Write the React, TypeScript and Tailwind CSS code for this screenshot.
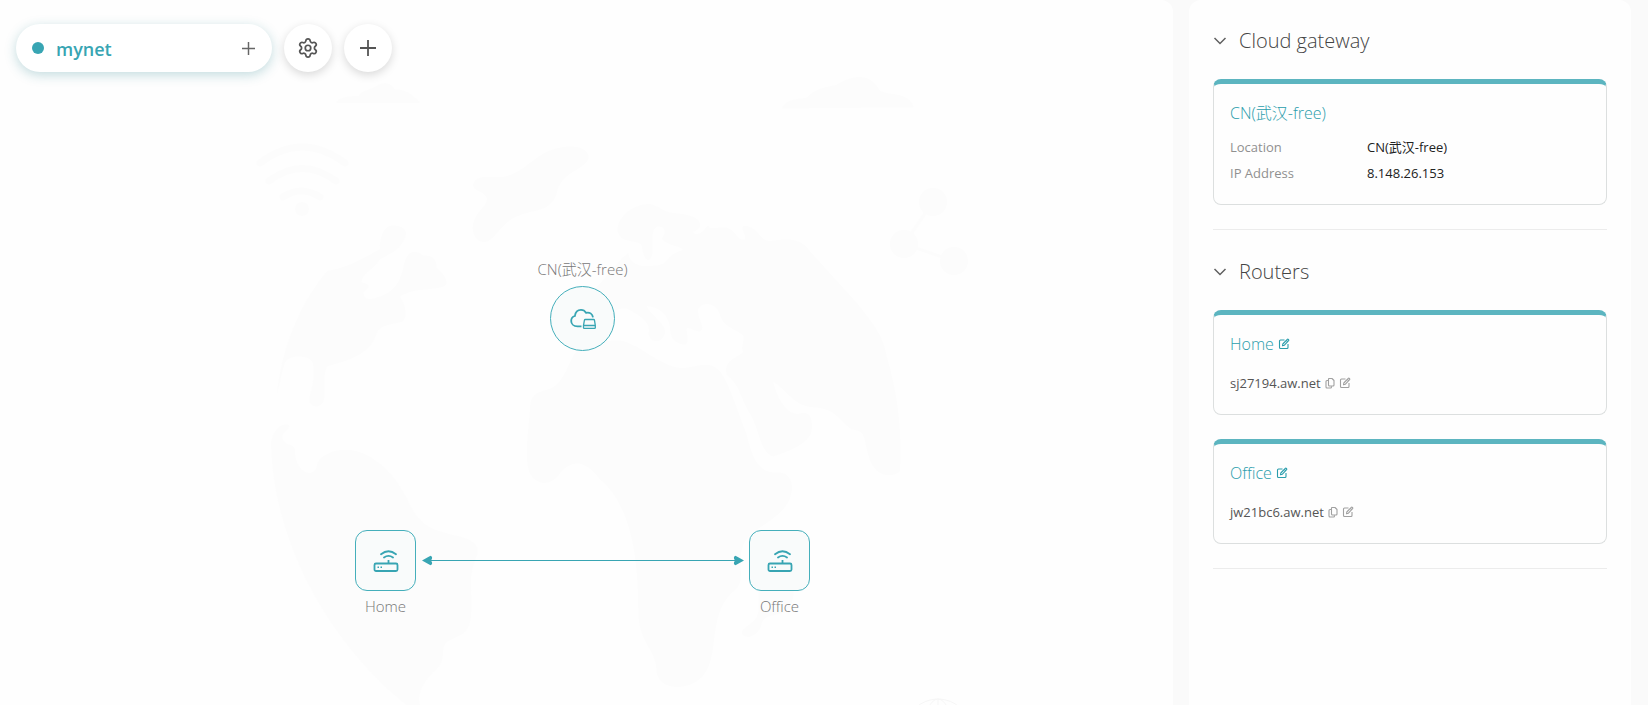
import { useState, type ReactNode } from "react";
import { Settings } from "lucide-react";

type Router = { name: string; host: string };

const routers: Router[] = [
  { name: "Home", host: "sj27194.aw.net" },
  { name: "Office", host: "jw21bc6.aw.net" },
];

function PlusIcon({ className }: { className: string }) {
  return (
    <svg viewBox="0 0 16 16" className={className} fill="none" stroke="currentColor" strokeWidth="1.8" aria-hidden="true">
      <path d="M8 0v16M0 8h16" />
    </svg>
  );
}

function EditIcon() {
  return (
    <svg viewBox="0 0 12 12" className="size-3" fill="none" stroke="currentColor" strokeWidth="1.1" strokeLinejoin="round" aria-hidden="true">
      <path d="M6.500 2H2.500Q1.500 2 1.500 3v6.500q0 1 1 1H9q1 0 1-1V6" />
      <path d="M4.500 7.800 4.800 6 9.300 1.300q.5-.5 1 0l.3.300q.5.500 0 1L6.200 7.300Z" />
      <path d="M8.300 2.400 9.600 3.700" />
    </svg>
  );
}

function CopyIcon() {
  return (
    <svg viewBox="0 0 10 12" className="h-3 w-2.5" fill="none" stroke="currentColor" strokeWidth="1.1" strokeLinejoin="round" aria-hidden="true">
      <path d="M4 1.500h3l2 2V8q0 1-1 1H4.500q-1 0-1-1V2q0-.5.5-.5Z" />
      <path d="M3.300 3.500H2q-1 0-1 1v5.500q0 1 1 1h3.500q1 0 1-1V9.200" />
    </svg>
  );
}

function RouterIcon() {
  return (
    <svg viewBox="0 0 26 24" className="h-6 w-[26px]" fill="none" stroke="currentColor" strokeWidth="1.800" aria-hidden="true">
      <rect x="1.500" y="14.500" width="23" height="7.500" rx="1.500" />
      <path d="M15.500 14v-3" />
      <path d="M8 5.200q7.500-6 15 0M11 8.500q4.500-3.200 9 0" strokeLinecap="round" />
      <path d="M4.500 18.300H6M7.500 18.300H9" strokeWidth="1.600" />
    </svg>
  );
}

function CloudIcon() {
  return (
    <svg viewBox="0 0 26 22" className="h-[22px] w-[26px]" fill="none" stroke="currentColor" strokeWidth="1.800" aria-hidden="true">
      <path d="M11.500 18.300H7.500C3.500 18.300 1.200 15.800 1.200 12.900c0-2.600 1.600-4.300 3.700-4.900C5.400 4.200 8 1.900 11 1.900c2.200 0 3.900 1 5 2.900 3.600-1 6.500 1 7 4.600" />
      <path d="M15.300 11.500h8.300q.8 0 .9.800l.8 5v2.400q0 .7-.8.700H14.300q-.8 0-.8-.7v-2.400l.9-5q.1-.8.900-.8ZM13.500 17.500h11.800" strokeWidth="1.300" />
    </svg>
  );
}

function MapBackdrop() {
  return (
    <svg width="1173" height="705" viewBox="0 0 1173 705" className="absolute left-0 top-0 text-[#fcfcfc]" fill="currentColor" aria-hidden="true">
      <g transform="translate(240 60) scale(.33333 .41135)">
        <path d="M288 104C300 88 330 88 355 88 370 70 400 72 415 60 440 52 455 58 465 72 500 70 520 88 540 104Z" />
        <path d="M1625 118C1640 95 1670 95 1700 92 1730 65 1770 65 1790 60 1840 35 1890 30 1920 75 1960 90 2000 75 2022 115Z" />
        <path d="M700 300C710 280 740 285 770 285 840 285 870 240 930 220 980 205 1040 205 1046 235 1045 265 960 270 950 325 930 375 870 360 820 385 780 400 760 445 730 443 700 440 690 410 705 385 720 360 745 350 740 335 730 315 695 320 700 300Z" />
        <path d="M110 815C125 700 180 590 262 513 320 505 350 490 420 460 420 430 430 403 460 402 500 405 505 420 490 440 475 465 450 470 420 485 400 510 365 520 365 540 390 545 395 550 370 565 375 590 400 580 420 575 470 560 480 535 490 505 500 460 525 460 550 475 580 475 590 485 590 505 625 530 630 550 600 553 560 560 520 555 480 575 500 600 500 620 490 635 460 645 420 640 410 665 390 715 330 730 260 745 245 780 260 810 250 830 240 850 205 845 208 820 220 790 225 760 218 735 205 715 140 715 133 740 125 760 120 785 110 815Z" />
        <path d="M93 930C100 895 130 880 148 888 145 905 130 900 127 915 130 940 165 930 165 950 165 985 190 1005 210 1004 235 1000 225 985 240 970 270 945 340 935 400 970 450 995 480 1035 500 1065 540 1140 580 1140 640 1155 700 1165 725 1180 708 1210 680 1270 700 1290 693 1350 690 1400 650 1400 620 1415 600 1430 620 1460 590 1480 550 1510 530 1540 540 1568L500 1568C300 1440 100 1200 93 930Z" />
        <path d="M870 850C870 800 910 810 940 795 980 775 990 720 1010 710 1060 690 1090 680 1140 682 1200 690 1250 740 1320 749 1360 750 1400 730 1430 750 1460 765 1490 850 1520 910 1540 980 1560 1005 1620 1003 1650 1005 1665 1030 1650 1065 1630 1110 1560 1130 1525 1160 1480 1200 1520 1260 1490 1285 1400 1340 1440 1440 1395 1490 1360 1535 1260 1535 1250 1490 1250 1430 1195 1420 1195 1340 1195 1200 1170 1080 1080 1020 1040 975 1000 970 965 1000 940 1030 910 1035 885 1020 850 1000 860 940 870 850Z" />
        <path d="M1505 1390C1520 1370 1550 1370 1555 1340 1560 1300 1540 1270 1600 1258 1665 1250 1670 1300 1650 1330 1620 1360 1580 1340 1565 1370 1560 1400 1510 1415 1505 1390Z" />
        <path d="M1132 410C1140 370 1190 350 1230 350 1260 355 1270 370 1300 372 1350 375 1385 385 1380 405 1370 420 1350 415 1365 423 1390 425 1395 405 1405 403 1410 415 1440 405 1460 408 1490 415 1490 440 1515 437 1520 425 1500 410 1510 403 1560 405 1555 440 1590 440 1640 435 1680 430 1710 465L1850 590C1900 640 1930 670 1940 720 1980 830 1985 920 1980 1000 1950 1020 1900 1010 1885 960 1870 920 1880 900 1835 898 1800 880 1790 850 1730 845 1660 845 1640 800 1600 783 1610 820 1640 865 1680 860 1705 850 1720 870 1715 900 1710 935 1630 955 1600 964 1560 955 1560 900 1530 860 1500 820 1500 790 1460 765 1450 730 1490 725 1510 710 1500 700 1515 680 1510 670 1480 650 1450 650 1440 620 1430 590 1390 585 1375 605 1370 630 1400 650 1380 660 1360 660 1340 645 1340 655 1340 670 1350 685 1335 692 1310 690 1290 680 1290 650 1285 620 1260 600 1220 598 1230 620 1280 640 1275 665 1265 690 1230 690 1225 665 1235 640 1200 620 1160 605 1130 600 1120 620 1080 620L1060 560C1100 530 1140 480 1165 470 1170 500 1210 505 1240 500 1290 500 1270 475 1330 462 1320 450 1290 455 1265 435 1280 420 1275 405 1255 405 1230 410 1240 440 1238 465 1235 495 1210 495 1205 450 1195 435 1135 450 1132 410Z" />
      </g>
      <g fill="none" stroke="currentColor" strokeWidth="7" strokeLinecap="round">
        <path d="M260 163q42-32 85 0M269 181q33-25 67 0M283 197q18-12 37 0" />
      </g>
      <circle cx="302" cy="209" r="7" />
      <path d="M933 202 904 244 954 261" fill="none" stroke="currentColor" strokeWidth="3" />
      <circle cx="933" cy="202" r="14" />
      <circle cx="904" cy="244" r="14" />
      <circle cx="954" cy="261" r="14" />
      <g fill="none" stroke="#f6f6f6">
        <circle cx="938" cy="732" r="33" />
        <ellipse cx="938" cy="732" rx="14" ry="33" />
        <path d="M938 699v30" />
      </g>
    </svg>
  );
}

function Section({ title, children }: { title: string; children: ReactNode }) {
  const [open, setOpen] = useState(true);
  return (
    <section className="border-b border-[#ececec] pb-6">
      <h2 className="mb-5">
        <button type="button" aria-expanded={open} onClick={() => setOpen(!open)} className="flex h-9 items-center gap-3 text-xl font-light text-[#444]">
          <svg viewBox="0 0 14 14" className="size-3.5" fill="none" stroke="#606060" strokeWidth="1.500" aria-hidden="true">
            <path d="M1.500 4 7 9.500 12.500 4" />
          </svg>
          {title}
        </button>
      </h2>
      {open && <div className="flex flex-col gap-6">{children}</div>}
    </section>
  );
}

function Card({ children }: { children: ReactNode }) {
  return (
    <article className="rounded-lg border border-t-[5px] border-[#dcdfdf] border-t-[#5cb5c0] px-4 pb-[18px] pt-4">{children}</article>
  );
}

function RouterCard({ router }: { router: Router }) {
  return (
    <Card>
      <div className="flex items-center gap-1 text-[#2a9dac]">
        <h3 className="text-base font-light leading-[26px]">{router.name}</h3>
        <button type="button" aria-label={`Rename ${router.name}`}>
          <EditIcon />
        </button>
      </div>
      <div className="mt-[13px] flex items-center gap-1 text-[#a0a0a0]">
        <span className="text-[13px] leading-[26px] text-[#555]">{router.host}</span>
        <button type="button" aria-label={`Copy ${router.host}`}>
          <CopyIcon />
        </button>
        <button type="button" aria-label={`Edit ${router.host}`}>
          <EditIcon />
        </button>
      </div>
    </Card>
  );
}

function RouterNode({ name }: { name: string }) {
  return (
    <div className="flex w-[61px] flex-col items-center gap-[3px] text-[#38a5b3]">
      <button type="button" aria-label={`Open ${name}`} className="flex size-[61px] items-center justify-center rounded-xl border border-[#45afbb] bg-[#f9fbfb]">
        <RouterIcon />
      </button>
      <span className="text-[15px] font-light leading-6 text-[#777]">{name}</span>
    </div>
  );
}

const roundButton =
  "flex size-12 items-center justify-center rounded-full bg-white text-[#555] shadow-[0_3px_10px_rgba(0,0,0,0.15)]";

export default function App() {
  return (
    <div className="flex min-h-screen gap-4 bg-[#fafafa] pr-[17px] font-['Open_Sans','Noto_Sans_CJK_SC',sans-serif]">
      <main className="relative min-w-0 flex-1 overflow-hidden rounded-tr-xl bg-[#fefefe]">
        <MapBackdrop />

        <nav aria-label="Networks" className="relative flex gap-3 px-4 pt-6">
          <div className="flex h-12 w-64 items-center rounded-full bg-white pl-4 pr-4 shadow-[0_3px_12px_rgba(40,130,140,0.28)]">
            <span className="size-3 rounded-full bg-[#38a5b3]" />
            <button type="button" className="ml-3 flex-1 pt-0.5 text-left text-lg font-semibold text-[#38a5b3]">
              mynet
            </button>
            <button type="button" aria-label="Add device to mynet" className="px-[1px] text-[#666]">
              <PlusIcon className="size-[13px]" />
            </button>
          </div>
          <button type="button" aria-label="Settings" className={roundButton}>
            <Settings size={22} strokeWidth={1.9} />
          </button>
          <button type="button" aria-label="Add network" className={roundButton}>
            <PlusIcon className="size-4" />
          </button>
        </nav>

        <div className="absolute left-[532px] top-[257px] flex w-[101px] flex-col items-center gap-[5px] text-[#38a5b3]">
          <span className="whitespace-nowrap text-[15px] font-light leading-6 text-[#777]">CN(武汉-free)</span>
          <button type="button" aria-label="Open cloud gateway" className="flex size-[65px] items-center justify-center rounded-full border border-[#45afbb] bg-[#f9fbfb]">
            <CloudIcon />
          </button>
        </div>
        <div className="absolute left-[355px] top-[530px]">
          <RouterNode name="Home" />
        </div>
        <div className="absolute left-[749px] top-[530px]">
          <RouterNode name="Office" />
        </div>
        <svg width="322" height="12" viewBox="0 0 322 12" className="absolute left-[422px] top-[555px] text-[#38a5b3]" aria-hidden="true">
          <path d="M8 5.500h306" stroke="currentColor" />
          <path d="M0 5.500 8.500.7Q11.500 2 9 5.500 11.500 9 8.500 10.300ZM322 5.500 313.500.7Q310.500 2 313 5.500 310.500 9 313.500 10.300Z" fill="currentColor" />
        </svg>
      </main>

      <aside aria-label="Network details" className="flex w-[442px] shrink-0 flex-col gap-6 rounded-t-xl bg-[#fefefe] px-6 pt-[23px]">
        <Section title="Cloud gateway">
          <Card>
            <h3 className="text-base font-light leading-[26px] text-[#2a9dac]">CN(武汉-free)</h3>
            <dl className="mt-2 grid grid-cols-[137px_1fr] text-[13px] leading-[26px] text-[#222]">
              <dt className="text-[#909090]">Location</dt>
              <dd>CN(武汉-free)</dd>
              <dt className="text-[#909090]">IP Address</dt>
              <dd>8.148.26.153</dd>
            </dl>
          </Card>
        </Section>
        <Section title="Routers">
          {routers.map((router) => (
            <RouterCard key={router.name} router={router} />
          ))}
        </Section>
      </aside>
    </div>
  );
}
